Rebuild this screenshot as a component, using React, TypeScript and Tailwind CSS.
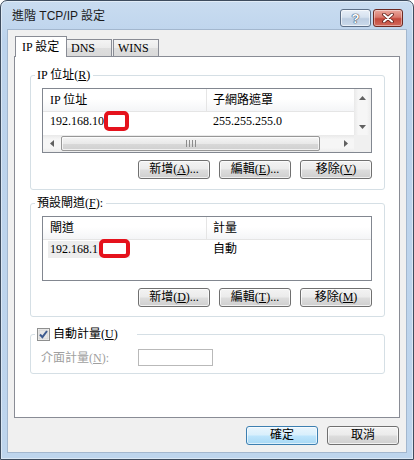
import React from 'react';

const btnBase =
  'h-[19px] w-[72px] rounded-[3px] border text-[12px] leading-[15px] text-black';
const btnNormal =
  'border-[#707070] bg-[linear-gradient(#f3f3f3_0%,#ebebeb_48%,#dddddd_52%,#cfcfcf_100%)] shadow-[inset_0_0_0_1px_rgba(255,255,255,0.7)]';
const btnDefault =
  'border-[#3c7fb1] bg-[linear-gradient(#e9f5fd_0%,#d8effc_48%,#bde5fc_52%,#a8d8f4_100%)] shadow-[inset_0_0_0_1px_rgba(255,255,255,0.6)]';

function Btn({ children, primary = false }: { children: React.ReactNode; primary?: boolean }) {
  return (
    <button type="button" className={`${btnBase} ${primary ? btnDefault : btnNormal}`}>
      {children}
    </button>
  );
}

function Group({
  legend,
  legendClass = '',
  className = '',
  children,
}: {
  legend: React.ReactNode;
  legendClass?: string;
  className?: string;
  children: React.ReactNode;
}) {
  return (
    <div className={`relative ml-[15px] w-[355px] rounded-[3px] border border-[#d5dfe5] ${className}`}>
      <div
        className={`absolute left-[4px] top-[-8px] flex h-[14px] items-center bg-white pl-[2px] pr-[3px] leading-[14px] ${legendClass}`}
      >
        {legend}
      </div>
      {children}
    </div>
  );
}

function Header({ a, b }: { a: string; b: string }) {
  return (
    <div className="flex h-[23px] border-b border-[#e5e5e5] bg-[linear-gradient(#ffffff_0%,#ffffff_45%,#f4f5f7_100%)]">
      <div className="w-[164px] border-r border-[#e5e5e5] pl-[7px] leading-[23px]">{a}</div>
      <div className="flex-1 pl-[6px] leading-[23px]">{b}</div>
    </div>
  );
}

function Redact({ className }: { className: string }) {
  return (
    <div className={`absolute rounded-[5px] border-[4px] border-[#e5121c] bg-white ${className}`} />
  );
}

function Arrow({ dir }: { dir: 'up' | 'down' | 'left' | 'right' }) {
  const pts = {
    up: '0,4 3.5,0 7,4',
    down: '0,0 3.5,4 7,0',
    left: '4,0 0,3.5 4,7',
    right: '0,0 4,3.5 0,7',
  }[dir];
  const vert = dir === 'up' || dir === 'down';
  return (
    <svg width={vert ? 7 : 4} height={vert ? 4 : 7} viewBox={vert ? '0 0 7 4' : '0 0 4 7'}>
      <polygon points={pts} fill="#606060" />
    </svg>
  );
}

function VScroll() {
  return (
    <div className="flex w-[17px] flex-col bg-[linear-gradient(to_right,#e9e9e9,#f6f6f6_25%,#f6f6f6_75%,#ececec)]">
      <div className="flex h-[17px] items-center justify-center">
        <Arrow dir="up" />
      </div>
      <div className="flex-1" />
      <div className="flex h-[17px] items-center justify-center">
        <Arrow dir="down" />
      </div>
    </div>
  );
}

function HScroll() {
  return (
    <div className="flex flex-1 items-stretch bg-[linear-gradient(#e9e9e9,#f6f6f6_25%,#f6f6f6_75%,#ececec)]">
      <div className="flex w-[17px] items-center justify-center">
        <Arrow dir="left" />
      </div>
      <div className="my-[1px] ml-[1px] flex w-[259px] items-center justify-center gap-[2px] rounded-[2px] border border-[#979797] bg-[linear-gradient(#f5f5f5_0%,#e9e9e9_50%,#d9d9d9_51%,#d0d0d0_100%)] shadow-[inset_0_0_0_1px_rgba(255,255,255,0.7)]">
        <div className="h-[7px] w-[1px] bg-[#8c8c8c]" />
        <div className="h-[7px] w-[1px] bg-[#8c8c8c]" />
        <div className="h-[7px] w-[1px] bg-[#8c8c8c]" />
        <div className="h-[7px] w-[1px] bg-[#8c8c8c]" />
      </div>
      <div className="flex-1" />
      <div className="flex w-[17px] items-center justify-center">
        <Arrow dir="right" />
      </div>
    </div>
  );
}

function CheckBox() {
  return (
    <svg width="13" height="13" viewBox="0 0 13 13">
      <rect x="0.5" y="0.5" width="12" height="12" fill="#f4f4f4" stroke="#8e8f8f" />
      <rect x="2" y="2" width="9" height="9" fill="#e6e6e6" stroke="#c8c8c8" strokeWidth="0.6" />
      <path d="M3 6.5 L5.4 9.2 L10 3" fill="none" stroke="#3c5a8f" strokeWidth="2" />
    </svg>
  );
}

export default function App() {
  return (
    <div className="h-[460px] w-[414px] bg-white">
      <div className="flex h-[460px] w-[414px] flex-col rounded-t-[7px] border border-[#3e4c5e] bg-[linear-gradient(#c9dcf0,#bcd3ec_40px,#bed5ed)] shadow-[inset_0_0_0_1px_rgba(255,255,255,0.45)] font-['Liberation_Serif','Noto_Sans_CJK_TC',serif] text-[12px] text-black">
        {/* title bar */}
        <div className="flex h-[28px] items-start">
          <div className="ml-[11px] mt-[8px] font-['Liberation_Sans','Noto_Sans_CJK_TC',sans-serif] text-[12px] leading-[15px] text-[#1b1b1b]">
            進階 TCP/IP 設定
          </div>
          <div className="ml-auto mr-[10px] mt-[8px] flex gap-[2px]">
            <div className="flex h-[18px] w-[31px] items-center justify-center rounded-[3px] border border-[#5d6f87] bg-[linear-gradient(#e8eff8_0%,#d5e1ef_45%,#bccde1_55%,#cbdaeb_100%)] shadow-[inset_0_0_0_1px_rgba(255,255,255,0.6)]">
              <span className="font-['Liberation_Sans',sans-serif] text-[13px] font-bold leading-none text-white [text-shadow:0_0_1px_#2f435c,0_0_1px_#2f435c,0_0_1px_#2f435c]">
                ?
              </span>
            </div>
            <div className="flex h-[18px] w-[30px] items-center justify-center rounded-[3px] border border-[#6e2a22] bg-[linear-gradient(#eaa89e_0%,#d9786c_45%,#c3483b_55%,#d26a5c_100%)] shadow-[inset_0_0_0_1px_rgba(255,255,255,0.4)]">
              <svg width="12" height="10" viewBox="0 0 12 10">
                <path d="M2 1.5 L10 8.5 M10 1.5 L2 8.5" stroke="#5b1d17" strokeWidth="3.6" strokeLinecap="round" />
                <path d="M2 1.5 L10 8.5 M10 1.5 L2 8.5" stroke="#ffffff" strokeWidth="2" strokeLinecap="round" />
              </svg>
            </div>
          </div>
        </div>

        {/* client */}
        <div className="mx-[6px] flex h-[424px] flex-col border border-[#a3b7ce] bg-[#f0f0f0] px-[6px] pt-[6px]">
          {/* tabs */}
          <div className="relative z-10 -mb-px flex h-[21px] items-end">
            <div className="ml-[1px] flex h-[21px] w-[52px] items-center border border-b-0 border-[#898c95] bg-white pl-[6px] leading-[14px]">
              IP 設定
            </div>
            <div className="mb-[1px] flex h-[17px] w-[45px] items-center border border-b-0 border-l-0 border-[#898c95] bg-[linear-gradient(#f4f4f4,#ebebeb_50%,#dedede_51%,#dadada)] pl-[4px] leading-[14px]">
              DNS
            </div>
            <div className="mb-[1px] ml-[1px] flex h-[17px] w-[46px] items-center border border-b-0 border-[#898c95] bg-[linear-gradient(#f4f4f4,#ebebeb_50%,#dedede_51%,#dadada)] pl-[4px] leading-[14px]">
              WINS
            </div>
          </div>

          <div className="flex h-[362px] flex-col border border-[#898c95] bg-white">
            {/* IP addresses */}
            <Group
              legend={
                <span>
                  IP 位址(<u>R</u>)
                </span>
              }
              className="mt-[18px] pl-[11px] pt-[12px] pb-[10px]"
            >
              <div className="flex h-[65px] w-[330px] flex-col border border-[#828790] bg-white">
                <div className="flex h-[46px]">
                  <div className="flex-1 overflow-hidden">
                    <Header a="IP 位址" b="子網路遮罩" />
                    <div className="relative flex h-[18px] items-center leading-[18px]">
                      <div className="w-[164px] pl-[7px]">192.168.10</div>
                      <div className="pl-[6px]">255.255.255.0</div>
                      <Redact className="left-[61px] top-[-1px] h-[20px] w-[25px]" />
                    </div>
                    <div className="flex h-[18px] items-center leading-[18px]">
                      <div className="w-[164px] pl-[7px]">169.254.169.254</div>
                      <div className="pl-[6px]">255.255.0.0</div>
                    </div>
                  </div>
                  <VScroll />
                </div>
                <div className="flex h-[17px]">
                  <HScroll />
                  <div className="w-[17px] bg-[#f0f0f0]" />
                </div>
              </div>
              <div className="mt-[7px] flex w-[330px] justify-end gap-[9px]">
                <Btn>
                  新增(<u>A</u>)...
                </Btn>
                <Btn>
                  編輯(<u>E</u>)...
                </Btn>
                <Btn>
                  移除(<u>V</u>)
                </Btn>
              </div>
            </Group>

            {/* default gateways */}
            <Group
              legend={
                <span>
                  預設閘道(<u>F</u>):
                </span>
              }
              className="mt-[13px] pl-[11px] pt-[12px] pb-[9px]"
            >
              <div className="flex h-[65px] w-[330px] flex-col border border-[#828790] bg-white">
                <Header a="閘道" b="計量" />
                <div className="relative flex h-[18px] items-center leading-[17px]">
                  <div className="w-[164px] pl-[5px]">
                    <span className="inline-block h-[17px] w-[82px] bg-[#ededed] pl-[2px]">192.168.1</span>
                  </div>
                  <div className="pl-[6px]">自動</div>
                  <Redact className="left-[56px] top-[-1px] h-[19px] w-[31px]" />
                </div>
              </div>
              <div className="mt-[7px] flex w-[330px] justify-end gap-[9px]">
                <Btn>
                  新增(<u>D</u>)...
                </Btn>
                <Btn>
                  編輯(<u>T</u>)...
                </Btn>
                <Btn>
                  移除(<u>M</u>)
                </Btn>
              </div>
            </Group>

            {/* automatic metric */}
            <Group
              legend={
                <span className="flex items-center gap-[3px]">
                  <CheckBox />
                  <span>
                    自動計量(<u>U</u>)
                  </span>
                </span>
              }
              legendClass="pr-[19px]"
              className="mt-[17px] pl-[10px] pt-[14px] pb-[7px]"
            >
              <div className="flex h-[17px] items-center">
                <span className="w-[97px] text-[#a0a0a0]">
                  介面計量(<u>N</u>):
                </span>
                <div className="h-[17px] w-[75px] border border-[#b9b9b9] bg-white" />
              </div>
            </Group>
          </div>

          <div className="mt-[8px] flex justify-end gap-[9px] pr-[1px]">
            <Btn primary>確定</Btn>
            <Btn>取消</Btn>
          </div>
        </div>
      </div>
    </div>
  );
}
